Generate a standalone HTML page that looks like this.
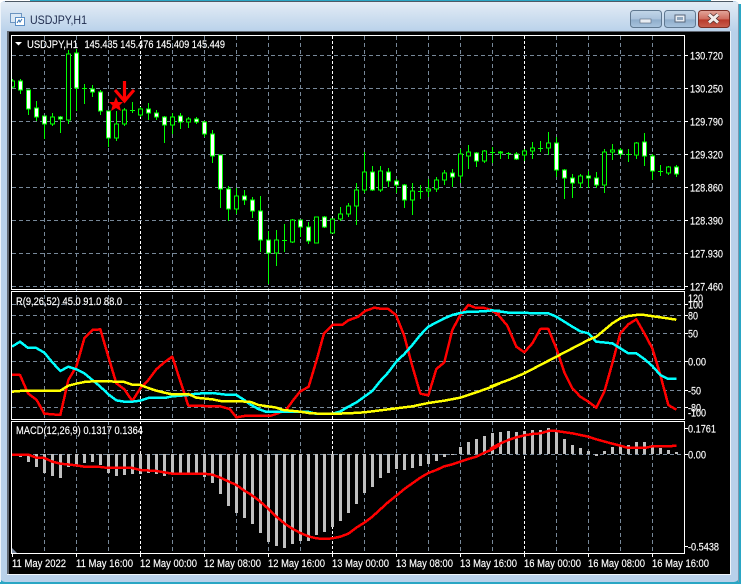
<!DOCTYPE html>
<html><head><meta charset="utf-8"><title>USDJPY,H1</title>
<style>
html,body{margin:0;padding:0;width:741px;height:584px;overflow:hidden;background:#2aa6c4}
svg{display:block;position:absolute;left:0;top:0}
text{font-family:"Liberation Sans",sans-serif;font-size:11px;fill:#fff;stroke:#fff;stroke-width:.15}
.a{stroke:#fff;stroke-width:1;fill:none}
</style></head><body>
<svg width="741" height="584" viewBox="0 0 741 584" xmlns="http://www.w3.org/2000/svg">
<defs>
<linearGradient id="t" x1="0" y1="0" x2="0" y2="1"><stop offset="0" stop-color="#e3ecf5"/><stop offset="1" stop-color="#b9d1ea"/></linearGradient>
<linearGradient id="b" x1="0" y1="0" x2="0" y2="1"><stop offset="0" stop-color="#c3d6e8"/><stop offset=".5" stop-color="#aac3dc"/><stop offset=".55" stop-color="#8fadcb"/><stop offset="1" stop-color="#a9c4de"/></linearGradient>
<linearGradient id="r" x1="0" y1="0" x2="0" y2="1"><stop offset="0" stop-color="#e3a79c"/><stop offset=".5" stop-color="#cf6d5f"/><stop offset=".55" stop-color="#b93a2b"/><stop offset="1" stop-color="#c8604f"/></linearGradient>
<clipPath id="m"><rect x="12" y="36" width="672" height="253"/></clipPath>
</defs>
<rect x="0" y="0" width="741" height="584" fill="#2aa6c4"/>
<rect x="0" y="0" width="30" height="4" fill="#fff"/><rect x="711" y="0" width="30" height="4" fill="#fff"/>
<rect x="0" y="1" width="739" height="581" rx="5" fill="#b9d1ea"/>
<path d="M5 1.500H733" stroke="#4e5a66" fill="none"/>
<rect x="0" y="4" width="1" height="578" fill="#eef4fa"/>
<rect x="738" y="4" width="1" height="578" fill="#7f97ad"/>
<rect x="1" y="2" width="737" height="30" fill="url(#t)"/>
<rect x="7" y="31" width="724" height="544" fill="#f0f5fa"/>
<rect x="7" y="31" width="723" height="543" fill="#5f6670"/>
<rect x="9" y="32" width="721" height="542" fill="#000"/>

<!-- title icon -->
<rect x="10.5" y="13.5" width="11" height="9" fill="#dbe8f5" stroke="#6c94c0"/>
<rect x="15.5" y="17.5" width="9" height="8" fill="#fff" stroke="#5c8fc6"/>
<path d="M17 23l2-3 1 2 2-3" stroke="#3674b5" fill="none"/>
<text x="30" y="24" textLength="57" lengthAdjust="spacingAndGlyphs" style="font-size:12px;fill:#1e2a4c;stroke:none">USDJPY,H1</text>

<!-- window buttons -->
<rect x="630.5" y="10.5" width="31" height="17" rx="3" fill="url(#b)" stroke="#5f7890"/>
<rect x="640" y="19" width="11" height="4" fill="#e8edf3" stroke="#56657a" stroke-width=".6"/>
<rect x="664.5" y="10.5" width="31" height="17" rx="3" fill="url(#b)" stroke="#5f7890"/>
<rect x="675" y="15" width="10" height="7" fill="#e8edf3" stroke="#56657a"/><rect x="677" y="17" width="6" height="3" fill="#8fa6bd"/>
<rect x="698.5" y="10.5" width="31" height="17" rx="3" fill="url(#r)" stroke="#7a2e25"/>
<path d="M709 14.5l9 8M718 14.5l-9 8" stroke="#4a2a28" stroke-width="4.4"/>
<path d="M709 14.5l9 8M718 14.5l-9 8" stroke="#f2ecea" stroke-width="3"/>

<!-- grids -->
<g fill="none" stroke="#778899" stroke-width="1" stroke-dasharray="4 3" shape-rendering="crispEdges">
<path d="M12 55.5H684M12 88.5H684M12 121.5H684M12 154.5H684M12 187.5H684M12 220.5H684M12 253.5H684M12 286.5H684"/>
<path d="M12 304.5H684M12 315.5H684M12 333.5H684M12 361.5H684M12 390.5H684M12 407.5H684"/>
<path d="M12 454.5H684"/>
<path d="M44.5 36V553M76.5 36V553M108.5 36V553M172.5 36V553M204.5 36V553M236.5 36V553M268.5 36V553M300.5 36V553M364.5 36V553M396.5 36V553M428.5 36V553M460.5 36V553M492.5 36V553M556.5 36V553M588.5 36V553M620.5 36V553M652.5 36V553"/>
</g>
<path d="M140.5 36V553M332.5 36V553M524.5 36V553" fill="none" stroke="#fff" stroke-dasharray="3 2" shape-rendering="crispEdges"/>

<!-- candles -->
<g clip-path="url(#m)" shape-rendering="crispEdges">
<path fill="none" stroke="#0f0" d="M12.5 79V88M20.5 79V94M28.5 90V115M36.5 101V121M44.5 116V139M52.5 113V126M60.5 116V133M68.5 50V124M76.5 49V111M84.5 84V104M92.5 85V97M100.5 90V115M108.5 111V147M116.5 111V141M124.5 108V126M132.5 102V113M140.5 107V117M148.5 103V120M156.5 110V120M164.5 116V143M172.5 113V134M180.5 113V129M188.5 117V128M196.5 117V124M204.5 121V137M212.5 130V163M220.5 155V208M228.5 186V221M236.5 188V214M244.5 190V205M252.5 197V218M260.5 196V252M268.5 231V284M276.5 230V266M284.5 224V252M292.5 219V243M300.5 220V237M308.5 222V244M316.5 217V243M324.5 216V228M332.5 219V233M340.5 207V221M348.5 203V217M356.5 183V225M364.5 152V193M372.5 166V191M380.5 166V192M388.5 168V187M396.5 179V193M404.5 184V208M412.5 183V215M420.5 185V199M428.5 179V197M436.5 177V192M444.5 170V185M452.5 169V187M460.5 149V183M468.5 145V169M476.5 152V167M484.5 150V163M492.5 147V163M500.5 151V159M508.5 152V159M516.5 152V160M524.5 149V161M532.5 142V159M540.5 141V152M548.5 132V155M556.5 137V177M564.5 169V199M572.5 174V198M580.5 174V188M588.5 171V188M596.5 172V188M604.5 149V193M612.5 144V160M620.5 148V157M628.5 149V162M636.5 142V159M644.5 133V166M652.5 154V180M660.5 165V176M668.5 166V175M676.5 165V177"/>
<path fill="none" stroke="#0f0" d="M82 88.5h5M130 110.5h5M282 240.5h5M418 191.5h5M490 152.5h5M506 153.5h5M538 148.5h5M626 154.5h5M658 171.5h5"/>
<path fill="#000" stroke="#0f0" d="M10.5 81h4v6h-4zM50.5 117h4v7h-4zM66.5 54h4v66h-4zM114.5 124h4v14h-4zM122.5 110h4v14h-4zM138.5 109h4v6h-4zM170.5 117h4v8h-4zM186.5 119h4v3h-4zM234.5 196h4v13h-4zM274.5 240h4v13h-4zM290.5 220h4v22h-4zM314.5 217h4v26h-4zM330.5 219h4v14h-4zM338.5 214h4v5h-4zM346.5 206h4v8h-4zM354.5 190h4v16h-4zM362.5 172h4v18h-4zM378.5 171h4v19h-4zM410.5 191h4v9h-4zM426.5 189h4v2h-4zM434.5 180h4v9h-4zM442.5 173h4v7h-4zM458.5 154h4v22h-4zM466.5 152h4v4h-4zM482.5 151h4v10h-4zM522.5 151h4v4h-4zM530.5 148h4v3h-4zM546.5 143h4v5h-4zM578.5 176h4v7h-4zM602.5 152h4v33h-4zM610.5 150h4v2h-4zM634.5 143h4v12h-4zM666.5 167h4v6h-4z"/>
<path fill="#fff" stroke="#0f0" d="M18.5 81h4v9h-4zM26.5 90h4v19h-4zM34.5 108h4v9h-4zM42.5 116h4v8h-4zM58.5 117h4v2h-4zM74.5 53h4v35h-4zM90.5 89h4v3h-4zM98.5 92h4v19h-4zM106.5 111h4v27h-4zM146.5 109h4v4h-4zM154.5 113h4v4h-4zM162.5 117h4v8h-4zM178.5 116h4v6h-4zM194.5 119h4v3h-4zM202.5 122h4v12h-4zM210.5 134h4v22h-4zM218.5 155h4v34h-4zM226.5 189h4v20h-4zM242.5 196h4v4h-4zM250.5 200h4v11h-4zM258.5 211h4v29h-4zM266.5 240h4v13h-4zM298.5 220h4v7h-4zM306.5 227h4v14h-4zM322.5 217h4v10h-4zM370.5 172h4v18h-4zM386.5 172h4v9h-4zM394.5 181h4v4h-4zM402.5 185h4v15h-4zM450.5 173h4v4h-4zM474.5 153h4v8h-4zM498.5 152h4v1h-4zM514.5 154h4v5h-4zM554.5 143h4v27h-4zM562.5 170h4v8h-4zM570.5 178h4v5h-4zM586.5 176h4v2h-4zM594.5 178h4v7h-4zM618.5 150h4v4h-4zM642.5 142h4v14h-4zM650.5 156h4v15h-4zM674.5 167h4v7h-4z"/>
</g>

<!-- arrow + star -->
<path d="M124.5 81V100M115 90l9.500 11 9.500-11" fill="none" stroke="#f00" stroke-width="3.2"/>
<polygon points="116,97 118,102 123,102 119.500,105.500 121,111 116,108 111,111 112.500,105.500 109,102 114,102" fill="#f00"/>

<!-- MACD histogram -->
<path fill="none" stroke="#c0c0c0" stroke-width="3" shape-rendering="crispEdges" d="M20.5 454V457M28.5 454V462M36.5 454V467M44.5 454V473M52.5 454V476M60.5 454V478M68.5 454V467M76.5 454V465M84.5 454V463M92.5 454V462M100.5 454V465M108.5 454V473M116.5 454V476M124.5 454V475M132.5 454V474M140.5 454V474M148.5 454V473M156.5 454V474M164.5 454V476M172.5 454V473M180.5 454V473M188.5 454V473M196.5 454V473M204.5 454V477M212.5 454V483M220.5 454V494M228.5 454V506M236.5 454V513M244.5 454V518M252.5 454V524M260.5 454V533M268.5 454V542M276.5 454V546M284.5 454V548M292.5 454V544M300.5 454V541M308.5 454V541M316.5 454V535M324.5 454V532M332.5 454V527M340.5 454V521M348.5 454V513M356.5 454V504M364.5 454V493M372.5 454V487M380.5 454V478M388.5 454V473M396.5 454V469M404.5 454V470M412.5 454V468M420.5 454V466M428.5 454V464M436.5 454V461M444.5 454V457M452.5 454V455M460.5 454V447M468.5 454V442M476.5 454V439M484.5 454V436M492.5 454V433M500.5 454V432M508.5 454V431M516.5 454V432M524.5 454V431M532.5 454V430M540.5 454V430M548.5 454V428M556.5 454V432M564.5 454V439M572.5 454V445M580.5 454V448M588.5 454V451M596.5 454V456M604.5 454V451M612.5 454V447M620.5 454V446M628.5 454V445M636.5 454V442M644.5 454V442M652.5 454V445M660.5 454V448M668.5 454V450M676.5 454V452"/>

<!-- indicator lines (coords in 3x space) -->
<g fill="none" stroke-width="7.5" stroke-linejoin="round" shape-rendering="crispEdges">
<g transform="translate(0,285) scale(.33333)">
<polyline stroke="#f00" points="36,270 60,270 84,325 110,345 133,386 181,390 205,285 229,245 253,160 277,135 301,133 325,215 349,295 373,313 397,348 421,310 445,285 469,253 493,232 517,215 565,362 613,363 660,364 689,372 709,397 733,393 750,393"/>
<polyline stroke="#0ff" points="36,185 60,170 84,189 109,189 133,203 157,232 181,258 205,245 229,253 253,265 277,285 301,305 325,328 349,346 373,350 397,350 421,347 445,339 493,339 517,334 565,330 589,326 637,324 685,330 709,330 733,345 750,358"/>
<polyline stroke="#ff0" points="36,320 60,318 84,317 181,317 205,302 229,296 253,291 277,289 325,289 373,291 397,299 421,300 445,309 469,317 493,323 517,328 565,327 589,338 637,343 661,348 709,349 750,350"/>
</g>
<g transform="translate(250,285) scale(.33333)">
<polyline stroke="#f00" points="0,393 60,393 84,385 108,375 130,345 150,320 176,305 200,225 222,145 248,120 276,120 295,106 325,95 345,78 373,68 397,72 415,72 438,90 462,150 486,240 511,326 535,331 559,252 583,232 607,135 631,90 655,60 679,69 703,69 727,76 750,87"/>
<polyline stroke="#0ff" points="0,358 25,372 50,381 176,381 200,387 248,386 270,380 295,365 320,352 343,335 367,318 391,288 415,262 439,230 463,207 487,180 511,150 535,125 583,100 607,90 631,84 655,80 679,80 727,77 750,77"/>
<polyline stroke="#ff0" points="0,350 25,360 75,367 100,375 150,380 176,384 224,387 295,385 343,382 391,376 439,370 487,364 535,354 583,347 631,338 679,322 727,305 750,295"/>
</g>
<g transform="translate(490,285) scale(.33333)">
<polyline stroke="#f00" points="0,72 25,90 52,122 79,185 103,202 127,175 151,132 175,132 199,190 223,262 247,310 271,335 295,350 319,368 343,320 367,235 391,145 415,118 439,103 463,145 487,190 511,270 535,360 559,374"/>
<polyline stroke="#0ff" points="0,75 55,83 175,85 199,95 223,110 247,125 271,139 295,145 319,170 367,175 391,190 415,205 439,205 463,222 487,243 511,270 535,282 559,282"/>
<polyline stroke="#ff0" points="0,305 55,285 103,265 151,240 199,215 247,190 295,165 319,155 343,135 367,115 391,100 415,93 439,90 463,90 511,97 559,104"/>
</g>
<g stroke="#f00">
<polyline transform="translate(0,420) scale(.33333)" points="36,104 85,104 109,113 133,114 157,125 181,131 229,136 253,140 301,141 325,144 397,144 421,150 469,153 493,157 517,161 613,161 637,164 661,173 685,184 709,195 733,212 750,222"/>
<polyline transform="translate(250,420) scale(.33333)" points="0,222 25,240 50,262 79,290 103,310 127,326 151,339 175,349 199,355 223,357 247,355 271,350 295,341 319,323 343,308 367,290 391,268 415,246 439,227 463,207 487,190 511,173 535,159 559,150 583,139 607,133 631,125 655,117 679,110 703,98 727,88 750,75"/>
<polyline transform="translate(490,420) scale(.33333)" points="0,87 25,73 55,60 79,52 103,46 127,42 151,40 175,33 199,33 247,40 295,50 319,58 367,71 391,77 415,84 463,84 487,79 535,79 559,77"/>
</g>
</g>

<!-- panel frames -->
<g class="a" shape-rendering="crispEdges">
<path d="M11.5 35.5H684.5V289.5H11.5Z"/>
<path d="M11.5 291.5H684.5V419.5H11.5Z"/>
<path d="M11.5 421.5H684.5V553.5H11.5Z"/>
<path d="M685 55.5h3M685 88.5h3M685 121.5h3M685 154.5h3M685 187.5h3M685 220.5h3M685 253.5h3M685 286.5h3M685 304.5h3M685 315.5h3M685 333.5h3M685 361.5h3M685 390.5h3M685 407.5h3M685 428.5h3M685 454.5h3M685 546.5h3"/>
<path d="M12.5 554v3M76.5 554v3M140.5 554v3M204.5 554v3M268.5 554v3M332.5 554v3M396.5 554v3M460.5 554v3M524.5 554v3M588.5 554v3M652.5 554v3"/>
</g>
<polygon points="12,548 12,553 17,553" fill="#7d8ba0"/>

<!-- header labels -->
<polygon points="15,42 22,42 18.5,45.5" fill="#fff"/>
<text x="27" y="48" textLength="51" lengthAdjust="spacingAndGlyphs">USDJPY,H1</text>
<text x="84.5" y="48" textLength="140.500" lengthAdjust="spacingAndGlyphs">145.435 145.476 145.409 145.449</text>
<text x="16" y="305" textLength="106" lengthAdjust="spacingAndGlyphs">R(9,26,52) 45.0 91.0 88.0</text>
<text x="16" y="434" textLength="127" lengthAdjust="spacingAndGlyphs">MACD(12,26,9) 0.1317 0.1364</text>

<!-- price axis -->
<g>
<text x="690" y="59.500" textLength="33" lengthAdjust="spacingAndGlyphs">130.720</text>
<text x="690" y="92.500" textLength="33" lengthAdjust="spacingAndGlyphs">130.250</text>
<text x="690" y="125.500" textLength="33" lengthAdjust="spacingAndGlyphs">129.790</text>
<text x="690" y="158.500" textLength="33" lengthAdjust="spacingAndGlyphs">129.320</text>
<text x="690" y="191.500" textLength="33" lengthAdjust="spacingAndGlyphs">128.860</text>
<text x="690" y="224.500" textLength="33" lengthAdjust="spacingAndGlyphs">128.390</text>
<text x="690" y="257.500" textLength="33" lengthAdjust="spacingAndGlyphs">127.930</text>
<text x="690" y="290.500" textLength="33" lengthAdjust="spacingAndGlyphs">127.460</text>
<text x="688" y="302" textLength="15" lengthAdjust="spacingAndGlyphs">120</text>
<text x="688" y="308.500" textLength="15" lengthAdjust="spacingAndGlyphs">100</text>
<text x="688" y="319.500" textLength="10" lengthAdjust="spacingAndGlyphs">80</text>
<text x="688" y="337.500" textLength="10" lengthAdjust="spacingAndGlyphs">50</text>
<text x="688" y="365.500" textLength="18" lengthAdjust="spacingAndGlyphs">0.00</text>
<text x="688" y="394.500" textLength="13" lengthAdjust="spacingAndGlyphs">-50</text>
<text x="688" y="411.500" textLength="13" lengthAdjust="spacingAndGlyphs">-80</text>
<text x="688" y="416.500" textLength="18" lengthAdjust="spacingAndGlyphs">-100</text>
<text x="688" y="432.500" textLength="28" lengthAdjust="spacingAndGlyphs">0.1761</text>
<text x="688" y="458.500" textLength="18" lengthAdjust="spacingAndGlyphs">0.00</text>
<text x="688" y="550.500" textLength="31" lengthAdjust="spacingAndGlyphs">-0.5438</text>
</g>

<!-- time axis -->
<g>
<text x="12" y="567" textLength="54" lengthAdjust="spacingAndGlyphs">11 May 2022</text>
<text x="76" y="567" textLength="57" lengthAdjust="spacingAndGlyphs">11 May 16:00</text>
<text x="140" y="567" textLength="57" lengthAdjust="spacingAndGlyphs">12 May 00:00</text>
<text x="204" y="567" textLength="57" lengthAdjust="spacingAndGlyphs">12 May 08:00</text>
<text x="268" y="567" textLength="57" lengthAdjust="spacingAndGlyphs">12 May 16:00</text>
<text x="332" y="567" textLength="57" lengthAdjust="spacingAndGlyphs">13 May 00:00</text>
<text x="396" y="567" textLength="57" lengthAdjust="spacingAndGlyphs">13 May 08:00</text>
<text x="460" y="567" textLength="57" lengthAdjust="spacingAndGlyphs">13 May 16:00</text>
<text x="524" y="567" textLength="57" lengthAdjust="spacingAndGlyphs">16 May 00:00</text>
<text x="588" y="567" textLength="57" lengthAdjust="spacingAndGlyphs">16 May 08:00</text>
<text x="652" y="567" textLength="57" lengthAdjust="spacingAndGlyphs">16 May 16:00</text>
</g>
</svg>
</body></html>
